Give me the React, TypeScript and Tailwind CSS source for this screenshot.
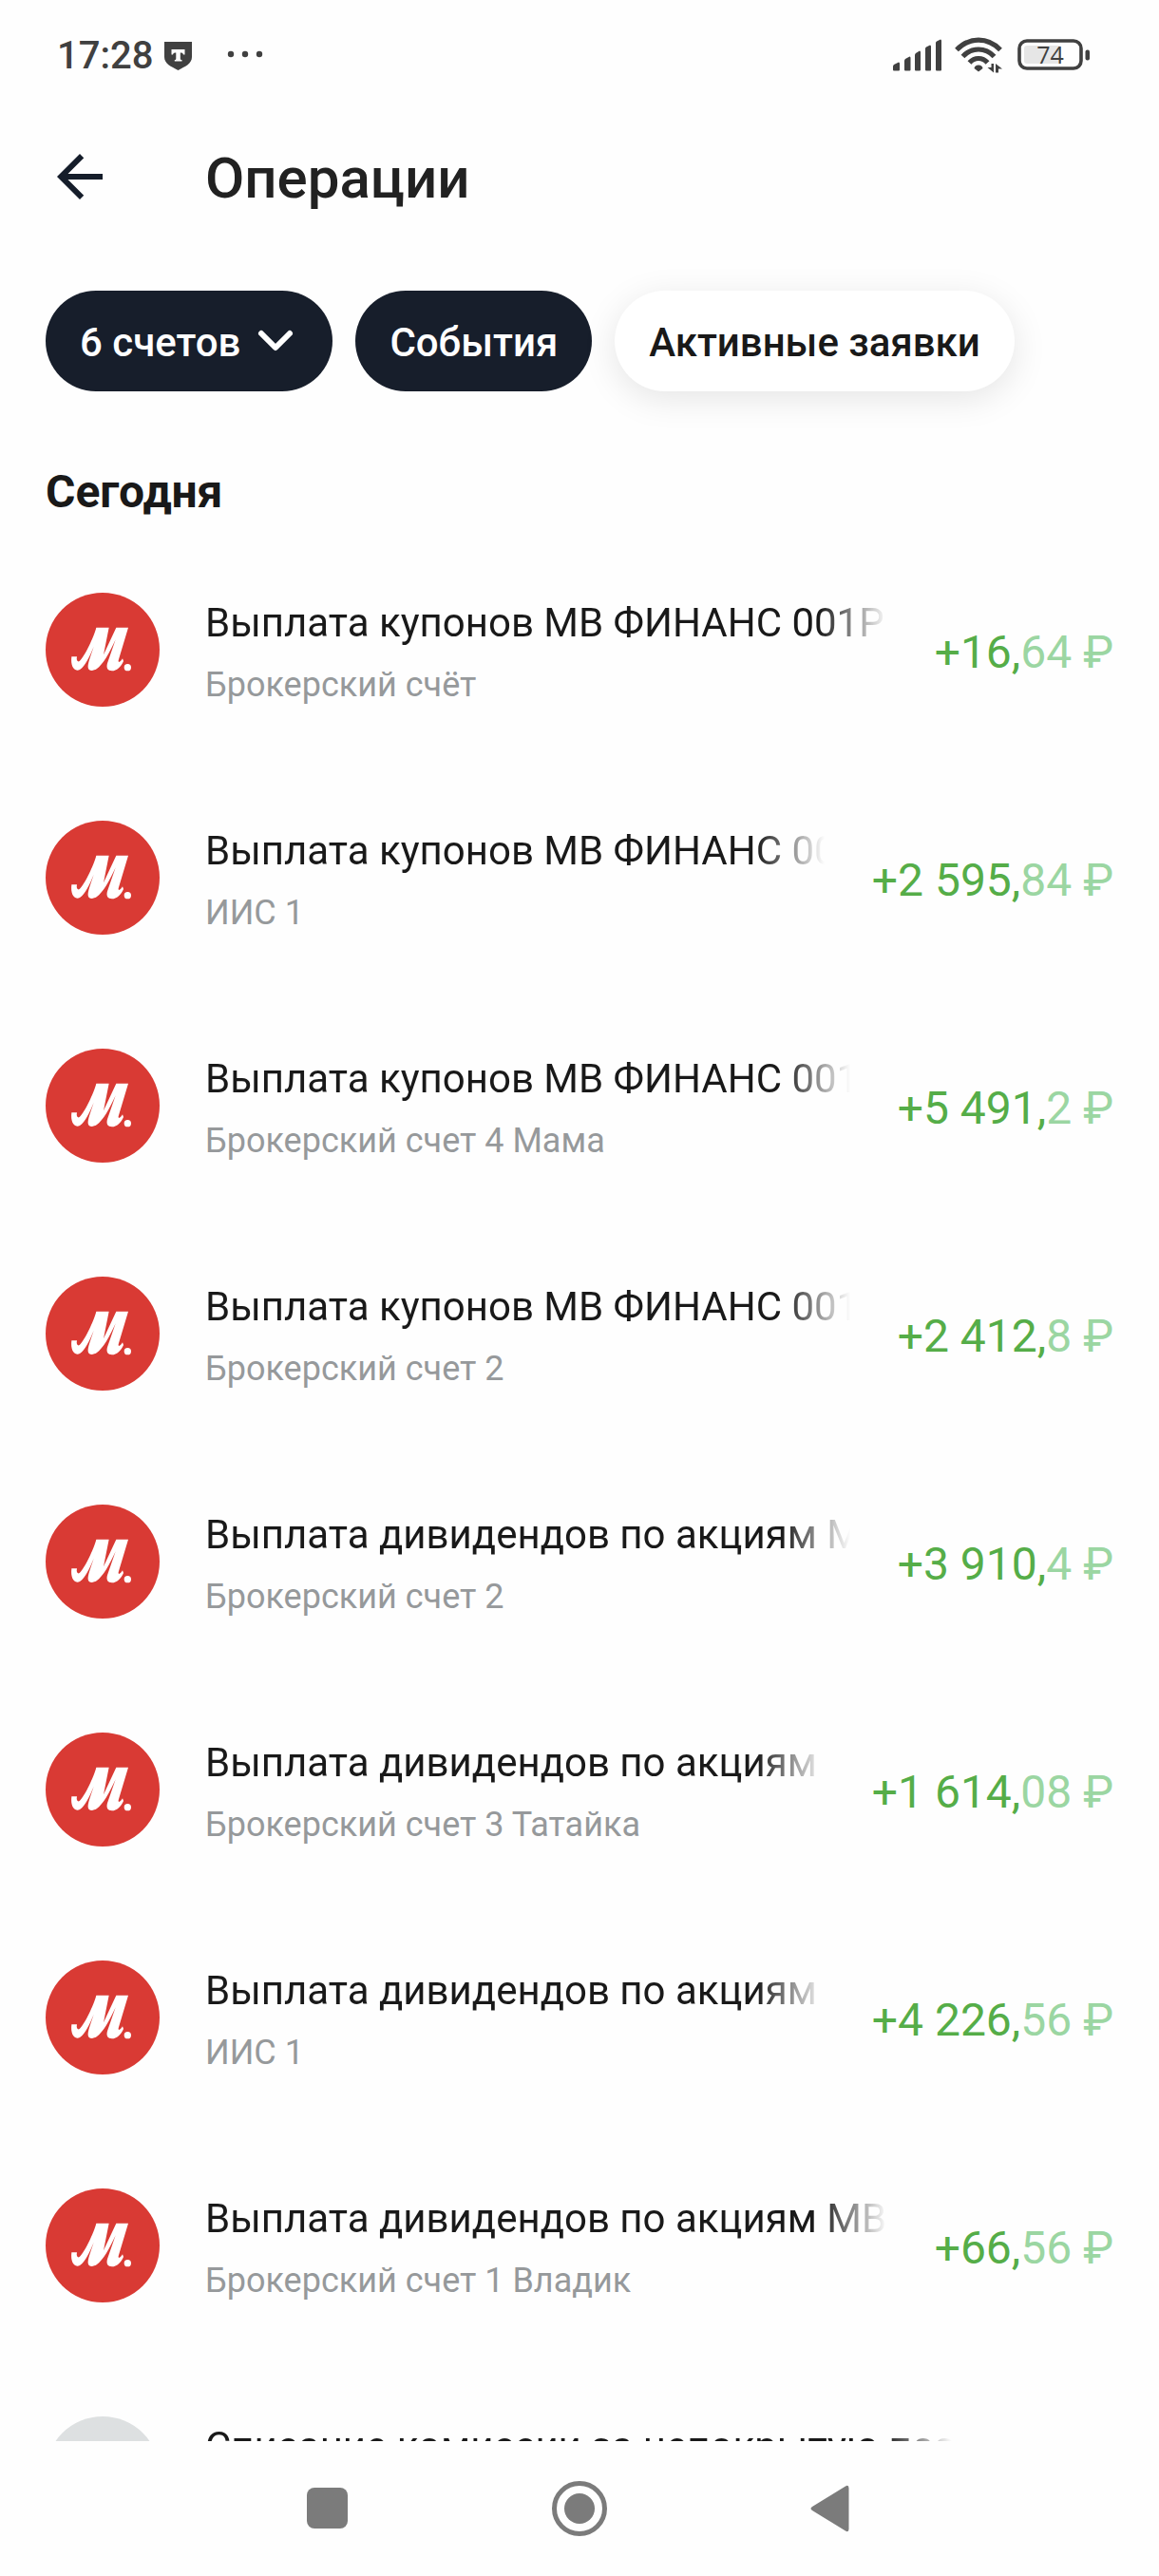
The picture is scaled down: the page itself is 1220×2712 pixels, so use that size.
import React from 'react';

interface Operation {
    id: number;
    title: string;
    account: string;
    whole?: string;
    fraction?: string;
    hasLogo: boolean;
}

const operations: Operation[] = [
    { id: 1, title: 'Выплата купонов МВ ФИНАНС 001P', account: 'Брокерский счёт', whole: '+16,', fraction: '64', hasLogo: true },
    { id: 2, title: 'Выплата купонов МВ ФИНАНС 001P', account: 'ИИС 1', whole: '+2 595,', fraction: '84', hasLogo: true },
    { id: 3, title: 'Выплата купонов МВ ФИНАНС 001P', account: 'Брокерский счет 4 Мама', whole: '+5 491,', fraction: '2', hasLogo: true },
    { id: 4, title: 'Выплата купонов МВ ФИНАНС 001P', account: 'Брокерский счет 2', whole: '+2 412,', fraction: '8', hasLogo: true },
    { id: 5, title: 'Выплата дивидендов по акциям МВ', account: 'Брокерский счет 2', whole: '+3 910,', fraction: '4', hasLogo: true },
    { id: 6, title: 'Выплата дивидендов по акциям МВ', account: 'Брокерский счет 3 Татайка', whole: '+1 614,', fraction: '08', hasLogo: true },
    { id: 7, title: 'Выплата дивидендов по акциям МВ', account: 'ИИС 1', whole: '+4 226,', fraction: '56', hasLogo: true },
    { id: 8, title: 'Выплата дивидендов по акциям МВ', account: 'Брокерский счет 1 Владик', whole: '+66,', fraction: '56', hasLogo: true },
    { id: 9, title: 'Списание комиссии за непокрытую поз', account: '', hasLogo: false },
];

const StatusBar: React.FC = () => (
    <div className="flex h-[118px] shrink-0 items-center justify-between pr-[72px] pl-[60px] text-[#404040]">
        <div className="flex items-center">
            <span className="text-[40px] leading-[44px] font-medium">17:28</span>
            <svg width="30" height="30" viewBox="0 0 30 30" className="ml-3" aria-hidden="true">
                <path d="M0 0H29V16C29 23 22 26 14.500 30C7 26 0 23 0 16Z" fill="currentColor" />
                <path d="M7.500 8H21.500V13.500H20C19.500 12 19 11.500 16.800 11.500V17.500C16.800 18.500 17.200 19 18.500 19V20.500H10.800V19C12 19 12.300 18.500 12.300 17.500V11.500C10 11.500 9.500 12 9 13.500H7.500Z" fill="#fff" />
            </svg>
            <svg width="38" height="8" viewBox="0 0 38 8" className="mb-1 ml-9" fill="currentColor" aria-hidden="true">
                <circle cx="4" cy="4" r="3.200" />
                <circle cx="19" cy="4" r="3.200" />
                <circle cx="34" cy="4" r="3.200" />
            </svg>
        </div>
        <div className="flex items-center">
            {/* Signal */}
            <svg width="51" height="40" viewBox="0 0 51 40" fill="currentColor" aria-hidden="true">
                <path d="M0 31Q0 30 1 29L6 26.500Q7 26.500 7 28V34.500Q7 35.500 6 35.500H1Q0 35.500 0 34.500Z" />
                <path d="M12 25Q12 24 13 23L17.500 20.500Q18.500 20.500 18.500 22V34.500Q18.500 35.500 17.500 35.500H13Q12 35.500 12 34.500Z" />
                <path d="M23 19Q23 18 24 17L28 14.500Q29 14.500 29 16V34.500Q29 35.500 28 35.500H24Q23 35.500 23 34.500Z" />
                <path d="M34 12Q34 11 35 10.500L39 8.500Q40 8.500 40 10V34.500Q40 35.500 39 35.500H35Q34 35.500 34 34.500Z" />
                <path d="M45 6Q45 5 46 4.500L50 2.500Q51 2.500 51 4V34.500Q51 35.500 50 35.500H46Q45 35.500 45 34.500Z" />
            </svg>
            {/* Wi-Fi */}
            <svg width="50" height="40" viewBox="0 0 50 40" className="ml-[14px]" fill="none" stroke="currentColor" strokeWidth="5.200" aria-hidden="true">
                <path d="M2 13.500Q12 3.200 25 3.200T48 13.500" />
                <path d="M8.500 20.500Q15.500 13 25 13T41.500 20.500" />
                <path d="M15.500 27Q19.500 22.500 25 22.500T34.500 27" />
                <path d="M20.500 33Q21 29.500 25 29.500T29.500 33L25 36.500Z" fill="currentColor" stroke="none" />
                <path d="M41 28V37.500L34.500 32H38.500V28ZM43 37.500V28L50 33.500H46V37.500Z" fill="currentColor" stroke="none" />
            </svg>
            {/* Battery */}
            <svg width="77" height="40" viewBox="0 0 77 40" className="ml-4" aria-label="74%">
                <rect x="7" y="9" width="39" height="19" rx="3" fill="#e6e6e6" />
                <rect x="2" y="4" width="65" height="29" rx="8" fill="none" stroke="currentColor" strokeWidth="3.600" />
                <rect x="71.500" y="13.500" width="4.500" height="11" rx="2" fill="currentColor" />
                <text x="34.500" y="28" textAnchor="middle" fontSize="25" fill="currentColor" className="font-['Open_Sans',sans-serif]">74</text>
            </svg>
        </div>
    </div>
);

const MvideoLogo: React.FC = () => (
    <svg viewBox="54 42 360 360" className="size-[120px] shrink-0" aria-hidden="true">
        <circle cx="234" cy="222" r="180" fill="#d93a34" />
        <path
            d="M136 244H153C150 256 156 262 161 258C178 242 205 185 214 152H254L237 238L277 152H315L284 256C283 264 290 262 297 250L300 258C292 276 278 289 264 289C250 289 245 280 249 265L275 190C258 228 235 270 215 283C205 289 190 291 188 278C187 265 195 245 206 212C195 240 178 275 162 285C145 293 132 275 136 244Z"
            fill="#fff"
        />
        <circle cx="313" cy="278" r="11" fill="#fff" />
    </svg>
);

const OperationRow: React.FC<{ operation: Operation }> = ({ operation }) => (
    <li className="flex items-start pb-[110px]">
        {operation.hasLogo ? <MvideoLogo /> : <div className="size-[120px] shrink-0 rounded-full bg-[#dde0e1]" />}
        <div className="ml-12 min-w-0 flex-1">
            <p className="overflow-hidden text-[42px] leading-[64px] whitespace-nowrap text-[#191919] [mask-image:linear-gradient(to_left,transparent,black_72px)]">
                {operation.title}
            </p>
            <p className="h-[66px] text-[36px] leading-[66px] whitespace-nowrap text-[#96999b]">{operation.account}</p>
        </div>
        <p className="ml-[50px] min-w-[120px] shrink-0 text-right text-[48px] leading-[126px] whitespace-nowrap text-[#55ad48]">
            {operation.whole}
            {operation.fraction && <span className="text-[#9bd6a2]">{operation.fraction} ₽</span>}
        </p>
    </li>
);

const NavigationBar: React.FC = () => (
    <nav className="flex h-[142px] shrink-0 items-center justify-center gap-[206px] text-[#7b7b7b]">
        <button type="button" aria-label="Недавние">
            <svg width="60" height="60" viewBox="0 0 60 60" fill="currentColor">
                <rect x="9" y="8" width="43" height="43" rx="8" />
            </svg>
        </button>
        <button type="button" aria-label="Домой">
            <svg width="60" height="60" viewBox="0 0 60 60">
                <circle cx="30" cy="30" r="26.500" fill="none" stroke="currentColor" strokeWidth="5" />
                <circle cx="30" cy="30" r="16" fill="currentColor" />
            </svg>
        </button>
        <button type="button" aria-label="Назад">
            <svg width="60" height="60" viewBox="0 0 60 60" fill="currentColor">
                <path d="M9 28L44 6.500Q47.500 4.500 47.500 8.500V51.500Q47.500 55.500 44 53.500L9 32Q6 30 9 28Z" />
            </svg>
        </button>
    </nav>
);

export default function App() {
    return (
        <div className="flex h-screen flex-col overflow-hidden bg-[#fefefe] font-[Roboto,sans-serif]">
            <StatusBar />

            <header className="flex h-34 shrink-0 items-center px-12">
                <button type="button" aria-label="Назад" className="mr-24 text-[#151d2a]">
                    <svg width="72" height="72" viewBox="0 0 24 24" fill="currentColor">
                        <path d="M20 11H7.830l5.590-5.590L12 4l-8 8 8 8 1.410-1.410L7.830 13H20v-2z" />
                    </svg>
                </button>
                <h1 className="pt-1 text-[60px] leading-[72px] font-medium text-[#212121]">Операции</h1>
            </header>

            <div className="mt-13 flex shrink-0 gap-6 px-12 text-[42px] font-medium whitespace-nowrap">
                <button type="button" className="flex h-[106px] items-center rounded-full bg-[#171e2b] px-9 pt-0.5 text-white">
                    6 счетов
                    <svg width="48" height="48" viewBox="0 0 48 48" className="ml-[13px]" fill="none" stroke="currentColor" strokeWidth="6" strokeLinecap="round" strokeLinejoin="round" aria-hidden="true">
                        <path d="M9 15L24 30L39 15" />
                    </svg>
                </button>
                <button type="button" className="h-[106px] rounded-full bg-[#171e2b] px-9 pt-0.5 text-white">События</button>
                <button type="button" className="h-[106px] rounded-full bg-white px-9 pt-0.5 text-[#191919] shadow-[0_8px_36px_rgba(0,0,0,0.1)]">Активные заявки</button>
            </div>

            <main className="min-h-0 flex-1 overflow-hidden px-12 pt-19">
                <h2 className="mb-19 text-[48px] leading-[60px] font-bold text-[#191919]">Сегодня</h2>
                <ul>
                    {operations.map(operation => <OperationRow key={operation.id} operation={operation} />)}
                </ul>
            </main>

            <NavigationBar />
        </div>
    );
}
